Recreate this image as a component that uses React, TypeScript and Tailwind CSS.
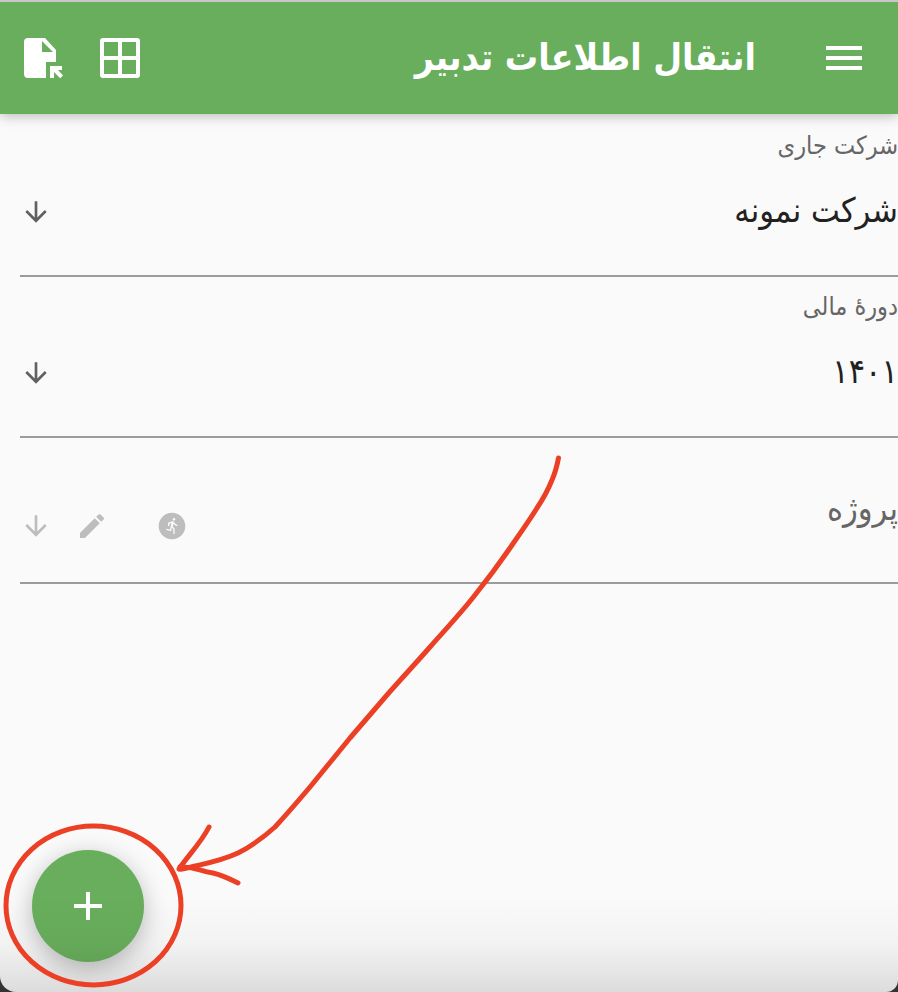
import type { ReactNode } from 'react';
import { MdAdd, MdArrowDownward, MdEdit, MdMenu, MdRunCircle } from 'react-icons/md';

const GridIcon = () => (
  <svg viewBox="0 0 48 48" className="size-12" fill="currentColor" aria-hidden="true">
    <path
      fillRule="evenodd"
      d="M7 4h34a3 3 0 0 1 3 3v34a3 3 0 0 1-3 3H7a3 3 0 0 1-3-3V7a3 3 0 0 1 3-3zM8 8v14h14V8zM26 8v14h14V8zM8 26v14h14V26zM26 26v14h14V26z"
    />
  </svg>
);

const FileImportIcon = () => (
  <svg viewBox="0 0 48 48" className="size-12" fill="currentColor" aria-hidden="true">
    <path
      fillRule="evenodd"
      d="M12 4h17l11 12v12H30v16H12a4 4 0 0 1-4-4V8a4 4 0 0 1 4-4zM26 7v11h11z"
    />
    <path d="M34 32h12v4h-4l5 5.500-2.800 2.800L38 38v6h-4z" />
  </svg>
);

type FieldProps = {
  id: string;
  label: string;
  value: string;
};

const SelectField = ({ id, label, value }: FieldProps) => (
  <div className="ml-5 h-[161px] border-b-2 border-[#9b9b9b] pt-3">
    <label htmlFor={id} className="block h-9 text-[25px] leading-9 text-[#666666]">
      {label}
    </label>
    <div className="mt-5 flex items-center">
      <select
        id={id}
        defaultValue={value}
        className="h-14 min-w-0 flex-1 appearance-none bg-transparent pb-1 text-[34px] text-[#212121] outline-none"
      >
        <option>{value}</option>
      </select>
      <MdArrowDownward className="pointer-events-none size-8 text-[#616161]" />
    </div>
  </div>
);

const IconButton = ({ label, children }: { label: string; children: ReactNode }) => (
  <button type="button" aria-label={label} className="block">
    {children}
  </button>
);

const Annotation = () => (
  <svg
    viewBox="0 452 562 540"
    className="pointer-events-none absolute bottom-0 left-0 h-[540px] w-[562px]"
    fill="none"
    stroke="#ec4026"
    strokeWidth="5"
    strokeLinecap="round"
    strokeLinejoin="round"
    aria-hidden="true"
  >
    <ellipse cx="93.500" cy="905.500" rx="87.500" ry="79.500" />
    <path d="M558.500 458C557 466 555.500 472 552 480C548 490 543 499 537 508C529 521 519 535 510 548C499 564 487 580 475 595C461 613 445 630 430 647C416 663 401 679 387 695C375 709 362 724 350 738C337 754 323 771 310 787C299 800 287 814 275 827C265 836 250 847 238 853C221 861 203 864 191 867C186 868 183 870 179 869C186 858 201 843 209 827" />
    <path d="M180 867C195 866 199 871 213 873C222 875 230 879 238 883" />
  </svg>
);

const App = () => {
  return (
    <div className="min-h-screen bg-[#333333] font-['DejaVu_Sans_Condensed','DejaVu_Sans',sans-serif]">
      <div
        dir="rtl"
        className="relative flex min-h-screen flex-col overflow-hidden rounded-br-xl rounded-bl-2xl border-t-2 border-[#c9c6cc] bg-[#fafafa]"
      >
        <header className="flex h-28 items-center bg-[#68ae5c] pr-[30px] pl-4 text-white shadow-[0_2px_12px_rgba(0,0,0,0.26)]">
          <IconButton label="منو">
            <MdMenu className="size-12" />
          </IconButton>
          <h1 className="mr-16 flex-1 text-[37px] leading-[56px] font-bold">انتقال اطلاعات تدبیر</h1>
          <div className="flex gap-8">
            <IconButton label="جدول">
              <GridIcon />
            </IconButton>
            <IconButton label="ورود فایل">
              <FileImportIcon />
            </IconButton>
          </div>
        </header>

        <main className="flex-1 pt-0.5">
          <SelectField id="company" label="شرکت جاری" value="شرکت نمونه" />
          <SelectField id="period" label="دورهٔ مالی" value="۱۴۰۱" />

          {/* Project */}
          <div className="ml-5 flex h-[146px] items-center border-b-2 border-[#9b9b9b]">
            <select
              aria-label="پروژه"
              className="h-14 min-w-0 flex-1 appearance-none bg-transparent pb-1 text-[34px] text-[#666666] outline-none"
            >
              <option>پروژه</option>
            </select>
            <div className="mt-8 flex items-center text-[#bdbdbd]">
              <IconButton label="اجرا">
                <MdRunCircle className="size-8" />
              </IconButton>
              <div className="mr-12">
                <IconButton label="ویرایش">
                  <MdEdit className="size-8" />
                </IconButton>
              </div>
              <MdArrowDownward className="pointer-events-none mr-6 size-8" />
            </div>
          </div>
        </main>

        <button
          type="button"
          aria-label="افزودن"
          className="absolute bottom-[30px] left-8 flex size-28 items-center justify-center rounded-full bg-[#68ae5c] text-white shadow-[0_6px_24px_rgba(0,0,0,0.26)]"
        >
          <MdAdd className="size-12" />
        </button>
        <div className="pointer-events-none absolute inset-x-0 bottom-0 h-24 bg-linear-to-b from-transparent via-black/3 to-black/12" />
        <Annotation />
      </div>
    </div>
  );
};

export default App;
